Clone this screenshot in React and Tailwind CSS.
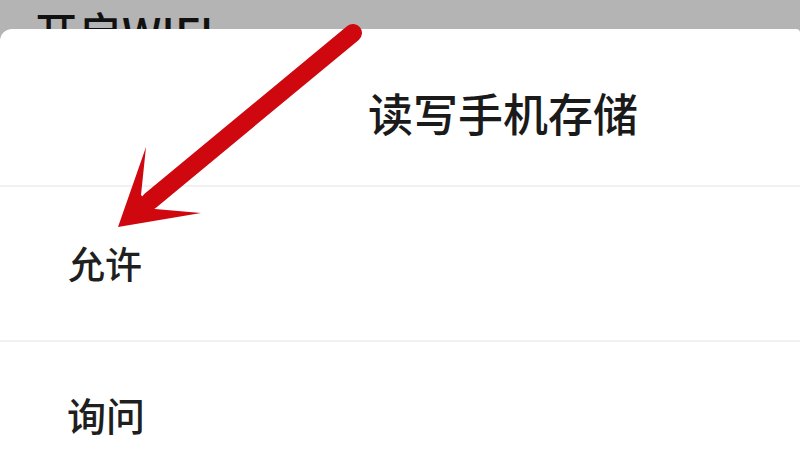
import React from "react";

export default function App() {
  const font = { fontFamily: '"Noto Sans CJK SC", "Noto Sans", sans-serif' };
  return (
    <div className="relative w-[800px] h-[451px] overflow-hidden bg-[#b4b4b4]" style={font}>
      <div className="h-[29px] overflow-hidden pl-[34px] pt-[9px]">
        <div className="text-[44px] leading-none font-medium text-[#111]">开启WIFI</div>
      </div>
      <div className="bg-white rounded-tl-[12px] rounded-tr-[4px] h-[422px] flex flex-col">
        <div className="h-[156px] flex items-center justify-center pl-[206px] pt-[10px]">
          <div className="text-[45px] leading-none font-medium text-[#1a1a1a]">读写手机存储</div>
        </div>
        <div className="h-[155px] border-t-2 border-[#f1f1f1] flex items-center pl-[68px]">
          <div className="text-[37px] leading-none font-medium text-[#1f1f1f]">允许</div>
        </div>
        <div className="flex-1 border-t-2 border-[#f1f1f1] flex items-start pl-[67px] pt-[53px]">
          <div className="text-[39px] leading-none font-medium text-[#1f1f1f]">询问</div>
        </div>
      </div>
      <svg className="absolute inset-0 pointer-events-none" width="800" height="451" viewBox="0 0 800 451">
        <line x1="353" y1="33" x2="150" y2="201" stroke="#cf0810" strokeWidth="18" strokeLinecap="round" />
        <polygon points="118,227 146,147 141,195 155,209 201,213" fill="#cf0810" />
      </svg>
    </div>
  );
}
